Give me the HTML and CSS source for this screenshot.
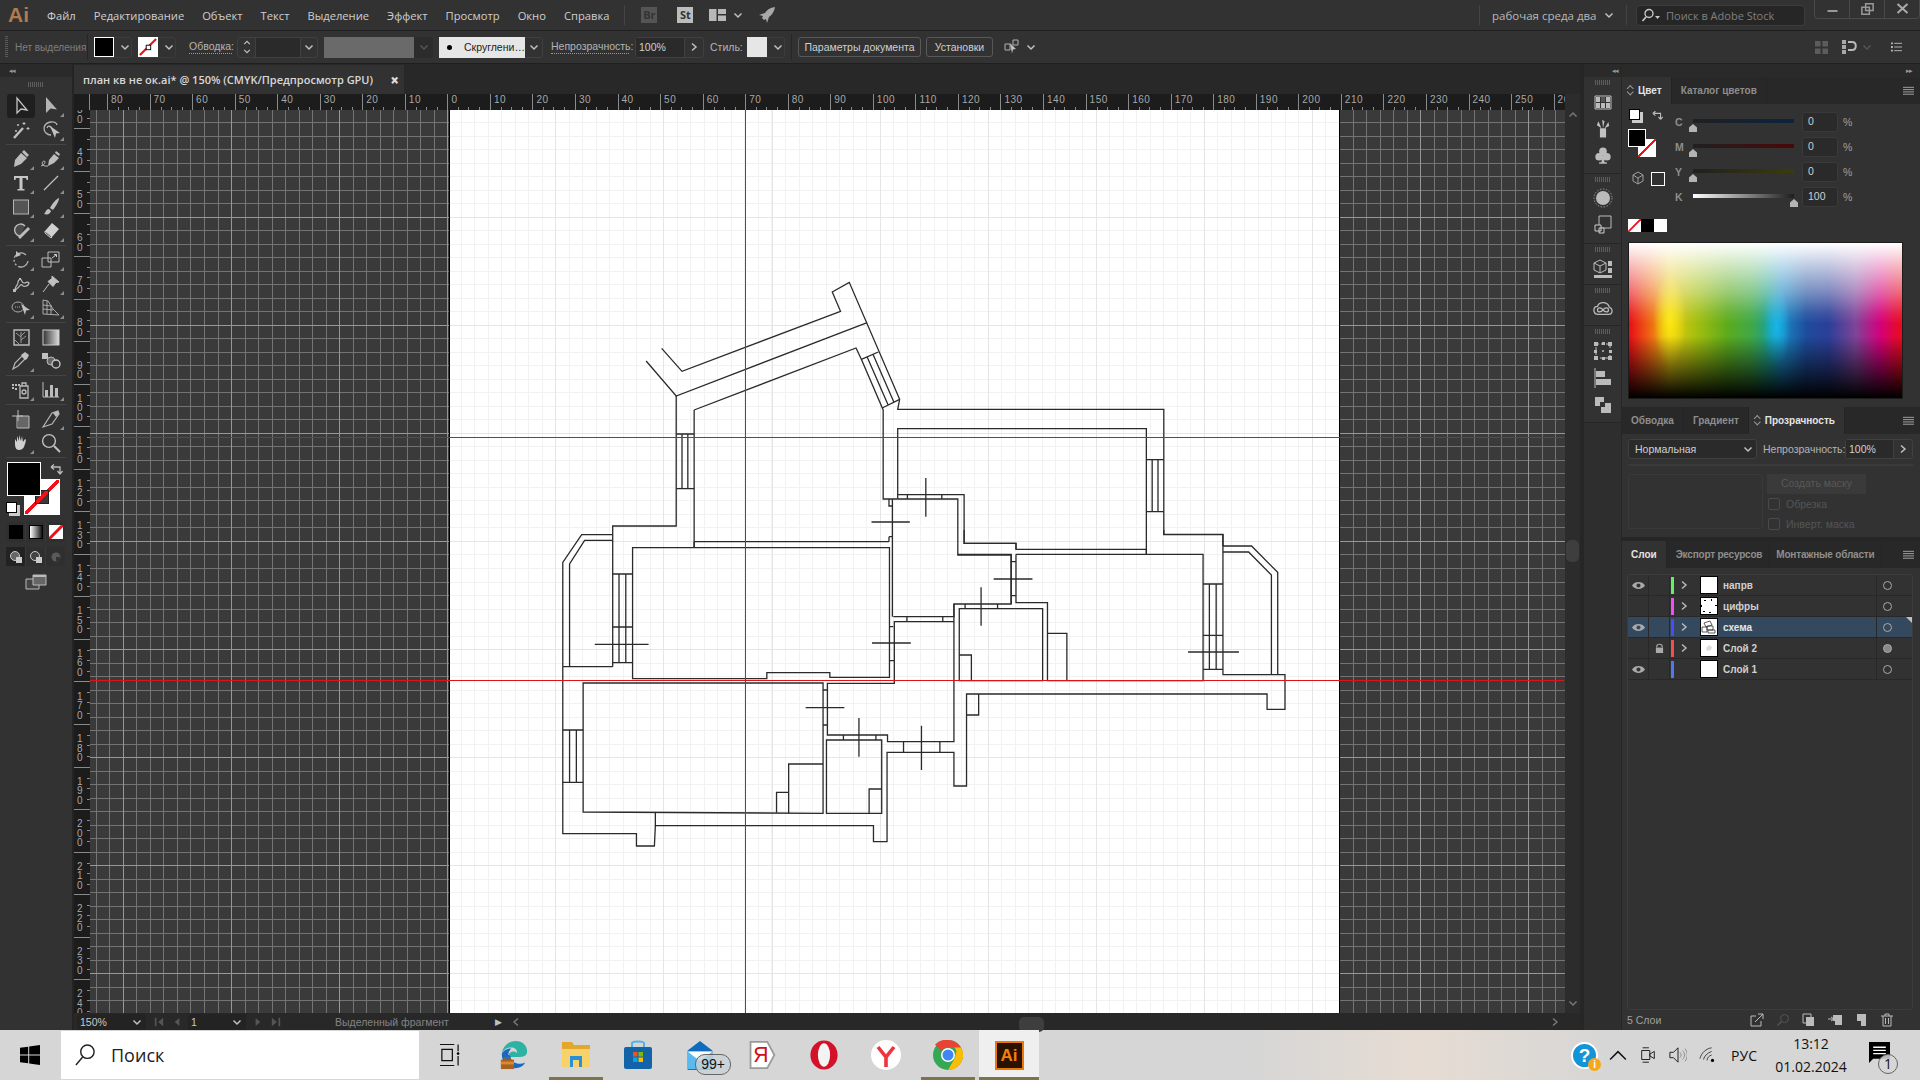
FILE: index.html
```html
<!DOCTYPE html>
<html lang="ru">
<head>
    <meta charset="UTF-8">
    <title>Adobe Illustrator</title>
    <link rel="stylesheet" href="styles.css">
</head>
<body>
    <svg class="defs" width="0" height="0">
        <symbol id="chev" viewBox="0 0 10 10"><path d="M1.5 3.5 5 7l3.5-3.5" fill="none" stroke="currentColor" stroke-width="1.5"/></symbol>
        <symbol id="next" viewBox="0 0 10 10"><path d="M3 1.5 7 5l-4 3.5" fill="none" stroke="currentColor" stroke-width="1.5"/></symbol>
        <symbol id="menu" viewBox="0 0 12 10"><path d="M0 1h12M0 3.5h12M0 6h12M0 8.5h12" fill="none" stroke="currentColor"/></symbol>
        <symbol id="none" viewBox="0 0 20 20"><rect width="20" height="20" fill="#fff"/><path d="M1 19 19 1" stroke="#e8141c" stroke-width="2.4"/><rect x="8" y="8" width="5" height="5" fill="#fff" stroke="#000"/></symbol>
        <symbol id="prev" viewBox="0 0 10 12"><path d="M8 1v10L2 6z" fill="currentColor"/></symbol>
        <symbol id="first" viewBox="0 0 12 12"><path d="M11 1v10L5 6zM1 1h2v10H1z" fill="currentColor"/></symbol>
    </svg>

    <header class="titlebar">
        <div class="ai-logo">Ai</div>
        <nav class="menu">
            <span>Файл</span><span>Редактирование</span><span>Объект</span><span>Текст</span><span>Выделение</span><span>Эффект</span><span>Просмотр</span><span>Окно</span><span>Справка</span>
        </nav>
        <i class="vsep"></i>
        <b class="bridge">Br</b>
        <b class="stock">St</b>
        <svg class="layout-ico" viewBox="0 0 17 12"><path d="M0 0h7.5v12H0zM9 0h8v5H9zM9 6.5h8V12H9z" fill="#b8b8b8"/></svg>
        <svg class="chev title-chev"><use href="#chev"/></svg>
        <svg class="rocket" viewBox="0 0 18 18"><path d="M17 1c-5 .5-8 3-10 6L1 9l4 1-1 2 2 2 2-1 1 4 2-6c3-2 5.500-6 6-10z" fill="#a8a8a8"/></svg>
        <div class="title-right">
            <i class="vsep"></i>
            <span class="workspace-name">рабочая среда два</span>
            <svg class="chev"><use href="#chev"/></svg>
            <i class="vsep"></i>
            <div class="stock-search">
                <svg viewBox="0 0 20 14"><circle cx="8" cy="5.500" r="4" fill="none" stroke="#c8c8c8" stroke-width="1.400"/><path d="M5 9 1.500 13" stroke="#c8c8c8" stroke-width="1.600"/><path d="M14 8h5l-2.500 3z" fill="#c8c8c8"/></svg>
                <span>Поиск в Adobe Stock</span>
            </div>
            <div class="win-controls">
                <span class="win-btn"><svg viewBox="0 0 14 14"><path d="M2 9h10" stroke="#999" stroke-width="2"/></svg></span>
                <span class="win-btn"><svg viewBox="0 0 16 14"><path d="M6 1.500h8v7H6zM2 5h8v7.500H2z" fill="none" stroke="#999" stroke-width="1.600"/></svg></span>
                <span class="win-btn"><svg viewBox="0 0 14 14"><path d="m2 2 10 9M12 2 2 11" stroke="#aaa" stroke-width="2"/></svg></span>
            </div>
        </div>
    </header>

    <section class="controlbar">
        <i class="grip"></i>
        <span class="ctl-label no-sel">Нет выделения</span>
        <i class="ctl-sep"></i>
        <div class="group swatch-group">
            <span class="ctl-swatch black"></span>
            <svg class="chev"><use href="#chev"/></svg>
        </div>
        <div class="group swatch-group">
            <svg class="ctl-swatch" viewBox="0 0 20 20"><use href="#none"/></svg>
            <svg class="chev"><use href="#chev"/></svg>
        </div>
        <span class="ctl-label dotted stroke-label">Обводка:</span>
        <div class="group stroke-group">
            <span class="spin"><svg class="chev flip"><use href="#chev"/></svg><svg class="chev"><use href="#chev"/></svg></span>
            <span class="grow"></span>
            <svg class="chev"><use href="#chev"/></svg>
        </div>
        <div class="group profile-group">
            <span class="profile"></span>
            <svg class="chev dim"><use href="#chev"/></svg>
        </div>
        <div class="group brush-group">
            <span class="brush"><i></i>Скруглени…</span>
            <svg class="chev"><use href="#chev"/></svg>
        </div>
        <span class="ctl-label dotted opacity-label">Непрозрачность:</span>
        <div class="group opacity-group">
            <span class="grow pct">100%</span>
            <svg class="chev"><use href="#next"/></svg>
        </div>
        <span class="ctl-label style-label">Стиль:</span>
        <div class="group swatch-group">
            <span class="ctl-swatch light"></span>
            <svg class="chev"><use href="#chev"/></svg>
        </div>
        <i class="ctl-sep"></i>
        <button class="ctl-btn doc-btn">Параметры документа</button>
        <button class="ctl-btn pref-btn">Установки</button>
        <svg class="arrange-ico" viewBox="0 0 16 16"><path d="M1 5h5v6H1zM9 1h5v5H9z" fill="none" stroke="#b0b0b0"/><path d="M6 4l6 6-3 .5-1 4z" fill="#c0c0c0"/></svg>
        <svg class="chev"><use href="#chev"/></svg>
        <div class="ctl-right">
            <svg class="align-ico" viewBox="0 0 14 14"><path d="M0 0h6v6H0zM8 0h6v6H8zM0 8h6v6H0zM8 8h6v6H8z" fill="#5c5c5c"/></svg>
            <svg class="magnet" viewBox="0 0 16 14"><path d="M0 0h4v4H0zM0 5h4v4H0zM0 10h4v4H0z" fill="#a8a8a8"/><path d="M6 2h4c5 0 5 8 0 8H6" fill="none" stroke="#b8b8b8" stroke-width="2"/></svg>
            <svg class="chev dim"><use href="#chev"/></svg>
            <svg class="props-ico" viewBox="0 0 12 10"><path d="M0 0h2v2H0zM0 4h2v2H0zM0 8h2v2H0z" fill="#bbb"/><path d="M3.500 1H12M3.500 5H12M3.500 9H12" stroke="#bbb"/></svg>
        </div>
    </section>

    <main class="workspace">
        <aside class="toolbar">
            <div class="collapse-row"><span class="dbl">◂◂</span></div>
            <i class="dock-grip"></i>
            <div class="tools">
                <span class="tool active"><svg viewBox="0 0 20 20"><path d="M6 2v15l4-4 6 1z" fill="none" stroke="#c4c4c4" stroke-width="1.300"/></svg></span>
                <span class="tool more"><svg viewBox="0 0 20 20"><path d="M5 1v16l4.500-4.500 6.500 1z" fill="#b4b4b4"/></svg></span>
                <span class="tool"><svg viewBox="0 0 20 20"><path d="m3 18 9-10" stroke="#c0c0c0" stroke-width="2.400"/><path d="M13 2v3M11.500 3.500h3M17 7v3M15.500 8.500h3M7 4v2M6 5h2M5 10v2M4 11h2" stroke="#c0c0c0"/></svg></span>
                <span class="tool more"><svg viewBox="0 0 20 20"><path d="M3 8c1-7 12-8 13-3M3 8c0 4 3 7 7 7M6 8c1-3 4-2 5 1" fill="none" stroke="#b4b4b4" stroke-width="1.300"/><path d="m9 6 10 7-4 .5L14 18z" fill="#c0c0c0"/></svg></span>
                <i class="tool-sep"></i>
                <span class="tool more"><svg viewBox="0 0 20 20"><path d="m3 18 1-7 6-7 6 5-6 6zM11 3l2-2 5 5-2 2z" fill="#bcbcbc"/></svg></span>
                <span class="tool more"><svg viewBox="0 0 20 20"><path d="m7 17 1-6 5-6 5 4-5 5zM14 4l1-2 4 3-1 2z" fill="#bcbcbc"/><path d="M7 17C-1 18 1 12 3 12s1 4-3 5" fill="none" stroke="#bcbcbc"/></svg></span>
                <span class="tool more"><svg viewBox="0 0 20 20"><path d="M3 3h14v4h-1.500c0-1.500 0-2-2-2H11.500v11h2v1.500h-7V16h2V5H6.500c-2 0-2 .5-2 2H3z" fill="#c6c6c6"/></svg></span>
                <span class="tool more"><svg viewBox="0 0 20 20"><path d="M3 17 17 3" stroke="#c0c0c0" stroke-width="1.300"/></svg></span>
                <span class="tool more"><svg viewBox="0 0 20 20"><rect x="2.500" y="3" width="15" height="14" fill="#555" stroke="#b4b4b4"/></svg></span>
                <span class="tool more"><svg viewBox="0 0 20 20"><path d="M18 1c-3 1-7 6-9 10l3 2c2-3 6-8 6-12zM8 12c-3 0-3 3-5 5 4 1 6 0 7-3z" fill="#c0c0c0"/></svg></span>
                <span class="tool more"><svg viewBox="0 0 20 20"><path d="M9 15A6 6 0 1 1 14 5" fill="#4a4a4a" stroke="#bbb" stroke-width="1.400"/><path d="m8 17 10-10" stroke="#bbb" stroke-width="3"/></svg></span>
                <span class="tool more"><svg viewBox="0 0 20 20"><path d="m11 2 7 6-7 8-7-6z" fill="#d0d0d0"/><path d="M4 10v2l6 5 1-1z" fill="#4a4a4a" stroke="#d0d0d0"/></svg></span>
                <i class="tool-sep"></i>
                <span class="tool more"><svg viewBox="0 0 20 20"><path d="M15 5a7 7 0 1 0 2 6" fill="none" stroke="#b0b0b0" stroke-width="1.300" stroke-dasharray="12 0 2 2 2 2 2 2"/><path d="m5 1 0 6 5-2z" fill="#c0c0c0"/></svg></span>
                <span class="tool more"><svg viewBox="0 0 20 20"><path d="M7 2h11v10H7zM1 8h9v9H1z" fill="none" stroke="#bbb"/><path d="m11 8 4-3M13 4.500h2.500V7" stroke="#ccc" fill="none"/></svg></span>
                <span class="tool more"><svg viewBox="0 0 20 20"><path d="M3 17c2-2 1-4 3-6s0-3 2-5c3-3 2 3 5 3s3-2 5 0c-1 4-6 4-7 2s-3 3-8 6z" fill="none" stroke="#bbb" stroke-width="1.200"/><path d="M2 15h3v3H2zM8 4h2v2H8z" fill="#bbb"/></svg></span>
                <span class="tool more"><svg viewBox="0 0 20 20"><path d="m11 2 7 6-3 .5-3 4-5-5 4-3zM8 10 2 18" stroke="#c0c0c0" fill="#c0c0c0"/></svg></span>
                <span class="tool more"><svg viewBox="0 0 20 20"><ellipse cx="7" cy="9" rx="6" ry="5" fill="none" stroke="#aaa"/><path d="M4 9h6" stroke="#aaa" stroke-dasharray="1 1"/><path d="m10 6 9 6-4 .5L14 17z" fill="#c0c0c0"/></svg></span>
                <span class="tool more"><svg viewBox="0 0 20 20"><path d="M2 2v14l16 1-6-6-5-8zM2 7l8 1M2 11l10 1M6 3v13M10 7v9" fill="none" stroke="#aaa"/></svg></span>
                <i class="tool-sep"></i>
                <span class="tool"><svg viewBox="0 0 20 20"><path d="M3 3h15v15H3z" fill="none" stroke="#bbb" stroke-width="1.400"/><path d="M10 16V5M10 10 5 6M10 13l5-4M10 9l4-4M3 12l5 5" stroke="#999"/></svg></span>
                <span class="tool"><svg viewBox="0 0 20 20"><defs><linearGradient id="gt"><stop offset="0" stop-color="#333"/><stop offset="1" stop-color="#ddd"/></linearGradient></defs><rect x="2" y="3" width="16" height="15" fill="url(#gt)"/><rect x="2" y="3" width="16" height="15" fill="none" stroke="#ccc"/></svg></span>
                <span class="tool more"><svg viewBox="0 0 20 20"><path d="m2 18 2-6 7-7 3 3-7 7z" fill="none" stroke="#b8b8b8" stroke-width="1.200"/><path d="m10 4 4-3 4 3-2 4-2 1z" fill="#c0c0c0"/></svg></span>
                <span class="tool"><svg viewBox="0 0 20 20"><path d="M1 2h6v6H1z" fill="#c0c0c0"/><circle cx="10" cy="10" r="4" fill="#666" stroke="#bbb"/><circle cx="15" cy="13" r="4" fill="#333" stroke="#ccc" stroke-width="1.300"/></svg></span>
                <i class="tool-sep"></i>
                <span class="tool more"><svg viewBox="0 0 20 20"><path d="M9 6h8v12H9zM11 3h4v3h-4z" fill="none" stroke="#bbb" stroke-width="1.300"/><circle cx="13" cy="12" r="2" fill="none" stroke="#bbb" stroke-width="1.300"/><path d="M1 4h2v2H1zM4 4h2v2H4zM1 7h2v2H1zM7 4h2v2H7zM4 8h2v2H4z" fill="#bbb"/></svg></span>
                <span class="tool more"><svg viewBox="0 0 20 20"><path d="M2 2v15h16" fill="none" stroke="#bbb"/><path d="M4 10h3v7H4zM9 5h3v12H9zM14 8h3v9h-3z" fill="#bbb"/></svg></span>
                <i class="tool-sep"></i>
                <span class="tool"><svg viewBox="0 0 20 20"><path d="M7 7h11v12H7z" fill="#666"/><path d="M7 1v11M1 7h11" stroke="#bbb"/><path d="M6 7h12v12H6z" fill="none" stroke="#bbb"/></svg></span>
                <span class="tool more"><svg viewBox="0 0 20 20"><path d="m2 18 9-14 6-2 1 3-7 10z" fill="none" stroke="#b8b8b8" stroke-width="1.200"/><path d="m12 4 5-2 1 3-3 3z" fill="#bbb"/></svg></span>
                <span class="tool more"><svg viewBox="0 0 20 20"><path d="M4 11V6l2 3V3l2 5V2l2 6 1-5 1 6 2-3c2 0 0 5-1 8-1 2-3 3-5 3-3 0-4-3-4-6z" fill="#d0d0d0"/></svg></span>
                <span class="tool"><svg viewBox="0 0 20 20"><circle cx="8" cy="8" r="6.400" fill="none" stroke="#c0c0c0" stroke-width="1.400"/><path d="m13 13 6 6" stroke="#c0c0c0" stroke-width="2"/></svg></span>
                <i class="tool-sep"></i>
            </div>
            <div class="fill-stroke">
                <span class="fs-fill"></span>
                <span class="fs-stroke"><i></i></span>
                <svg class="fs-swap" viewBox="0 0 14 14"><path d="M1 4h9v7M1 4l3-2.500M1 4l3 2.500M10 11l-2.500-3M10 11l2.500-3" fill="none" stroke="#bbb" stroke-width="1.300"/></svg>
                <span class="fs-default"></span>
            </div>
            <div class="mode-row">
                <span><i class="m-black"></i></span><span><i class="m-grad"></i></span><span><svg viewBox="0 0 14 14"><rect width="14" height="14" fill="#fff"/><path d="M0 14 14 0" stroke="#e8141c" stroke-width="3"/></svg></span>
            </div>
            <div class="mode-row draw-row">
                <span class="on"><svg viewBox="0 0 14 14"><circle cx="6" cy="6" r="4.500" fill="#666" stroke="#ccc"/><path d="M7 7h6v6H7z" fill="#ccc"/></svg></span>
                <span><svg viewBox="0 0 14 14"><circle cx="6" cy="6" r="4.500" fill="#444" stroke="#ccc"/><path d="M7 7h6v6H7z" fill="#ccc"/></svg></span>
                <span><svg viewBox="0 0 14 14"><circle cx="7" cy="7" r="4.500" fill="#5a5a5a"/><path d="M7 7h4v4H7z" fill="#333"/></svg></span>
            </div>
            <svg class="screen-ico" viewBox="0 0 22 16"><path d="M1 5h13v10H1z" fill="#444" stroke="#bbb"/><path d="M8 1h13v10H8z" fill="#666" stroke="#bbb"/><path d="M8 1h13v2H8z" fill="#bbb"/></svg>
        </aside>

        <section class="doc">
            <div class="tab-row">
                <div class="doc-tab"><span>план кв не ок.ai* @ 150% (CMYK/Предпросмотр GPU)</span><b>×</b></div>
            </div>
            <div class="ruler-h-row">
                <div class="ruler-corner"></div>
                <div class="ruler-h">
                    <span>80</span><span>70</span><span>60</span><span>50</span><span>40</span><span>30</span><span>20</span><span>10</span><span>0</span><span>10</span><span>20</span><span>30</span><span>40</span><span>50</span><span>60</span><span>70</span><span>80</span><span>90</span><span>100</span><span>110</span><span>120</span><span>130</span><span>140</span><span>150</span><span>160</span><span>170</span><span>180</span><span>190</span><span>200</span><span>210</span><span>220</span><span>230</span><span>240</span><span>250</span><span>260</span>
                </div>
                <div class="vscroll-cap"></div>
            </div>
            <div class="doc-body">
                <div class="ruler-v">
                    <span>30</span><span>40</span><span>50</span><span>60</span><span>70</span><span>80</span><span>90</span><span>100</span><span>110</span><span>120</span><span>130</span><span>140</span><span>150</span><span>160</span><span>170</span><span>180</span><span>190</span><span>200</span><span>210</span><span>220</span><span>230</span><span>240</span>
                </div>
                <div class="canvas">
                    <div class="artboard"></div>
                    <svg class="plan" viewBox="90 110 1474 903">
                        <g transform="translate(540 270) scale(.4847 .33333)" class="walls">
                            <path d="M251 235 293 304 620 124 603 66 638 37 742 388 738 418H1287V793H1409V828"/>
                            <path d="M219 273 281 378 675 158"/>
                            <path d="M281 378V768H150V1190"/>
                            <path d="M318 420 652 234 663 268 708 420V687H738"/>
                            <path d="M318 420V833"/>
                            <path d="M663 268 698 246M706 414 742 388M675 261 718 404M687 253 730 396"/>
                            <path d="M281 492H318M281 656H318M293 492V656M305 492V656"/>
                            <path d="M738 687V476H1251V853"/>
                            <path d="M1251 569H1287M1251 725H1287M1263 569V725M1275 569V725"/>
                            <path d="M738 674H875V820H982V838H1251M738 687H862V855H972"/>
                            <path d="M758 674V687M829 674V687"/>
                            <path d="M796 624V740M684 756H763"/>
                            <path d="M720 687V708H727M720 800H727V835M727 687V1040M720 800V815"/>
                            <path d="M318 815H720"/>
                        </g>
                        <g transform="translate(540 530) scale(.4847 .33333)" class="walls">
                            <path d="M191 53H721V442H598V428H468V446H191Z"/>
                            <path d="M318 35V53"/>
                            <path d="M729 260H854V222H972V73H862"/>
                            <path d="M875 0V40H982V57M982 73V218H1047V452H1368V73H982M1251 57V73"/>
                            <path d="M972 73V222M972 95H982M972 197H982"/>
                            <path d="M936 147H1016M910 172V287"/>
                            <path d="M865 236H1037V452H865ZM877 222V236M944 222V236"/>
                            <path d="M854 222V635H717V615H593V460H731V275H854"/>
                            <path d="M757 260V275M831 260V275"/>
                            <path d="M721 290H729M721 392H731M685 339H765"/>
                            <path d="M865 375H890V452M1047 310H1087V452"/>
                            <path d="M47 410V911H199V948H236L238 887H688V935H716V667H854V768H880V492H1500V538H1537V434H1409V14H1287V0"/>
                            <path d="M47 410V97L86 14H150M61 410V102L92 31H150M47 410H150"/>
                            <path d="M150 132H191M150 291H191M150 398H191M163 132V398M177 132V398M113 343H224"/>
                            <path d="M1368 162H1409M1368 316H1409M1368 418H1409M1381 162V418M1395 162V418M1337 366H1442"/>
                            <path d="M1409 48H1468L1522 127V434M1409 66H1462L1509 135V434"/>
                            <path d="M89 459H584V850L89 846Z"/>
                            <path d="M238 848V887"/>
                            <path d="M513 850V702H584M488 848V787H513"/>
                            <path d="M584 480H593M584 585H593M548 533H628M658 564V680"/>
                            <path d="M626 615V630M693 615V630"/>
                            <path d="M591 850V630H705V850ZM679 850V777H705"/>
                            <path d="M750 635V667M825 635V667M787 587V720"/>
                            <path d="M880 555H905V492"/>
                            <path d="M47 600H89M47 757H89M61 600V757M75 600V757"/>
                        </g>
                        <path class="guide" d="M745.500 110V1013M90 437.500H1564M90 680.500H1564"/>
                    </svg>
                </div>
                <div class="vscroll">
                    <svg class="chev flip"><use href="#chev"/></svg>
                    <i class="thumb"></i>
                    <svg class="chev"><use href="#chev"/></svg>
                </div>
            </div>
            <div class="statusbar">
                <div class="st-field zoom-field"><span>150%</span><svg class="chev"><use href="#chev"/></svg></div>
                <span class="st-nav"><svg class="nav-first"><use href="#first"/></svg><svg class="nav-prev"><use href="#prev"/></svg></span>
                <div class="st-field page-field"><span>1</span><svg class="chev"><use href="#chev"/></svg></div>
                <span class="st-nav"><svg class="nav-prev mirror"><use href="#prev"/></svg><svg class="nav-first mirror"><use href="#first"/></svg></span>
                <span class="st-text">Выделенный фрагмент</span>
                <span class="st-play">▶</span>
                <div class="hscroll"><svg class="chev left"><use href="#next"/></svg><i class="thumb"></i><svg class="chev"><use href="#next"/></svg></div>
            </div>
        </section>

        <nav class="dock">
            <div class="dock-top"><span class="dbl">◂◂</span></div>
            <div class="dock-group g1">
                <i class="dock-grip"></i>
                <svg viewBox="0 0 20 20"><path d="M2 4h16v13H2z" fill="none" stroke="#bbb"/><path d="M3 5h4v5H3zM8 5h4v5H8zM13 5h4v5h-4zM3 11h4v5H3zM8 11h4v5H8zM13 11h4v5h-4z" fill="#bbb"/><path d="M8 5h4v5H8z" fill="#555"/></svg>
                <svg viewBox="0 0 20 26"><path d="M6 12h8v12H6z" fill="#c0c0c0"/><path d="M8 12 4 3l-2 5zM10 12 9 1l3 2zM12 12l5-8 1 5z" fill="#c0c0c0"/></svg>
                <svg viewBox="0 0 20 26"><circle cx="10" cy="7" r="5" fill="#bbb"/><circle cx="5" cy="14" r="5" fill="#bbb"/><circle cx="15" cy="14" r="5" fill="#bbb"/><path d="M9 12h2l1 9h3v2H5v-2h3z" fill="#bbb"/></svg>
            </div>
            <div class="dock-group g2">
                <i class="dock-grip"></i>
                <svg viewBox="0 0 20 20"><circle cx="10" cy="10" r="7" fill="#bbb"/><circle cx="10" cy="10" r="9" fill="none" stroke="#999" stroke-dasharray="1.500 1.500"/></svg>
                <svg viewBox="0 0 20 20"><path d="M6 2h12v12H6z" fill="none" stroke="#bbb"/><path d="M2 11h6v6H2zM6 14h5v5H6z" fill="#333" stroke="#ccc"/></svg>
            </div>
            <div class="dock-group g3">
                <i class="dock-grip"></i>
                <svg viewBox="0 0 20 20"><path d="m7 2 6 3v7l-6 3-6-3V5z" fill="none" stroke="#bbb"/><path d="M1 5l6 3 6-3M7 8v7" fill="none" stroke="#bbb"/><path d="M15 3h4v5h-4zM15 10h4v5h-4zM1 17h18v3H1z" fill="#bbb"/></svg>
            </div>
            <div class="dock-group g3">
                <i class="dock-grip"></i>
                <svg viewBox="0 0 22 18"><path d="M6 15C2 15 1 12 1 10c0-3 2-4 4-4 1-3 4-4 6-4 4 0 6 2 7 5 2 1 3 2 3 4 0 3-2 4-4 4zM5 10c0 3 4 3 6 0s6-3 6 0-4 3-6 0-6-3-6 0z" fill="#333" stroke="#bbb" stroke-width="1.400"/></svg>
            </div>
            <div class="dock-group g1">
                <i class="dock-grip"></i>
                <svg viewBox="0 0 20 20"><path d="M3 3h14v14H3z" fill="none" stroke="#bbb" stroke-dasharray="3 2"/><path d="M1 1h4v4H1zM15 1h4v4h-4zM1 15h4v4H1zM15 15h4v4h-4zM9 1h3v3H9zM9 16h3v3H9zM1 9h3v3H1zM16 9h3v3h-3z" fill="#bbb"/><circle cx="10" cy="10" r="1" fill="#bbb"/></svg>
                <svg viewBox="0 0 20 20"><path d="M2 0v20" stroke="#bbb"/><path d="M3 3h9v6H3zM3 11h15v6H3z" fill="#bbb"/></svg>
                <svg viewBox="0 0 20 20"><path d="M2 2h9v9H2z" fill="#bbb"/><path d="M8 8h10v10H8z" fill="#bbb"/><path d="M7 7h5v5H7z" fill="#333"/></svg>
            </div>
        </nav>

        <aside class="panels">
            <div class="dock-top right"><span class="dbl">▸▸</span></div>

            <section class="panel color-panel">
                <div class="tabs">
                    <span class="tab active with-updown"><i class="updown"></i>Цвет</span>
                    <span class="tab">Каталог цветов</span>
                    <svg class="panel-menu"><use href="#menu"/></svg>
                </div>
                <div class="color-body">
                    <div class="color-top">
                        <div class="color-left">
                            <span class="fs-default small"></span>
                            <svg class="fs-swap small" viewBox="0 0 14 14"><path d="M1 4h9v7M1 4l3-2.500M1 4l3 2.500M10 11l-2.500-3M10 11l2.500-3" fill="none" stroke="#bbb" stroke-width="1.300"/></svg>
                            <span class="cp-fill"></span>
                            <span class="cp-stroke"></span>
                            <svg class="cube" viewBox="0 0 14 14"><path d="m7 1 5 3v6l-5 3-5-3V4zM2 4l5 3 5-3M7 7v6" fill="none" stroke="#a0a0a0"/></svg>
                            <span class="outline-sq"></span>
                        </div>
                        <div class="sliders">
                            <div class="slider-row"><label>C</label><div class="track t-c"><i class="pin"></i></div><span class="num">0</span><em>%</em></div>
                            <div class="slider-row"><label>M</label><div class="track t-m"><i class="pin"></i></div><span class="num">0</span><em>%</em></div>
                            <div class="slider-row"><label>Y</label><div class="track t-y"><i class="pin"></i></div><span class="num">0</span><em>%</em></div>
                            <div class="slider-row"><label>K</label><div class="track t-k"><i class="pin end"></i></div><span class="num">100</span><em>%</em></div>
                        </div>
                    </div>
                    <div class="mini-swatches">
                        <svg viewBox="0 0 14 14"><rect width="14" height="14" fill="#fff"/><path d="M0 14 14 0" stroke="#e8141c" stroke-width="2"/></svg><i class="mk"></i><i class="mw"></i>
                    </div>
                    <div class="spectrum"></div>
                </div>
            </section>

            <section class="panel transp-panel">
                <div class="tabs">
                    <span class="tab">Обводка</span>
                    <span class="tab">Градиент</span>
                    <span class="tab active with-updown"><i class="updown"></i>Прозрачность</span>
                    <svg class="panel-menu"><use href="#menu"/></svg>
                </div>
                <div class="transp-top">
                    <div class="blend-select"><span>Нормальная</span><svg class="chev"><use href="#chev"/></svg></div>
                    <span class="ctl-label panel-label">Непрозрачность:</span>
                    <div class="group p-opacity"><span class="grow pct">100%</span><svg class="chev"><use href="#next"/></svg></div>
                </div>
                <div class="transp-mask">
                    <div class="mask-preview"></div>
                    <div class="mask-opts">
                        <span class="mask-btn">Создать маску</span>
                        <label class="mask-check"><i></i>Обрезка</label>
                        <label class="mask-check"><i></i>Инверт. маска</label>
                    </div>
                </div>
            </section>

            <section class="panel layers-panel">
                <div class="tabs">
                    <span class="tab active">Слои</span>
                    <span class="tab tight">Экспорт ресурсов</span>
                    <span class="tab tight">Монтажные области</span>
                    <svg class="panel-menu"><use href="#menu"/></svg>
                </div>
                <div class="layers">
                    <div class="layer">
                        <span class="l-eye"><svg viewBox="0 0 14 9"><path d="M0 4.500C3-.5 11-.5 14 4.500 11 9.500 3 9.500 0 4.500z" fill="#aaa"/><circle cx="7" cy="4.500" r="2.200" fill="#333"/></svg></span>
                        <span class="l-lock"></span><i class="l-color" style="background:#5cf55c"></i>
                        <svg class="l-arrow"><use href="#next"/></svg><span class="thumb-box"></span><span class="l-name">напрв</span><span class="l-target"><i></i></span>
                    </div>
                    <div class="layer">
                        <span class="l-eye"></span>
                        <span class="l-lock"></span><i class="l-color" style="background:#f54cf5"></i>
                        <svg class="l-arrow"><use href="#next"/></svg><span class="thumb-box"><svg viewBox="0 0 16 16"><path d="M3 2h2v1H3zM10 1h1v2h-1zM0 7h1v2H0zM14 7h2v1h-2zM2 13h2v1H2zM8 14h2v1H8z"/></svg></span><span class="l-name">цифры</span><span class="l-target"><i></i></span>
                    </div>
                    <div class="layer selected">
                        <span class="l-eye"><svg viewBox="0 0 14 9"><path d="M0 4.500C3-.5 11-.5 14 4.500 11 9.500 3 9.500 0 4.500z" fill="#aaa"/><circle cx="7" cy="4.500" r="2.200" fill="#34495e"/></svg></span>
                        <span class="l-lock"></span><i class="l-color" style="background:#4c4cf5"></i>
                        <svg class="l-arrow"><use href="#next"/></svg><span class="thumb-box"><svg viewBox="0 0 16 16"><path d="M3 4 9 2l2 4-6 2zM6 7h6v4H6zM1 8h5v5H1zM7 11h7v3H7z" fill="none" stroke="#333" stroke-width=".8"/></svg></span><span class="l-name">схема</span><span class="l-target"><i></i></span><b class="l-corner"></b>
                    </div>
                    <div class="layer">
                        <span class="l-eye"></span>
                        <span class="l-lock"><svg viewBox="0 0 10 12"><path d="M2 5V3.500C2 .5 8 .5 8 3.500V5" fill="none" stroke="#aaa" stroke-width="1.300"/><path d="M1 5h8v6H1z" fill="#aaa"/></svg></span><i class="l-color" style="background:#f54c4c"></i>
                        <svg class="l-arrow"><use href="#next"/></svg><span class="thumb-box"><svg viewBox="0 0 16 16"><path d="M5 8l3-3 3 2-1 3-4 1z" fill="#ddd"/></svg></span><span class="l-name">Слой 2</span><span class="l-target filled"><i></i></span>
                    </div>
                    <div class="layer">
                        <span class="l-eye"><svg viewBox="0 0 14 9"><path d="M0 4.500C3-.5 11-.5 14 4.500 11 9.500 3 9.500 0 4.500z" fill="#aaa"/><circle cx="7" cy="4.500" r="2.200" fill="#333"/></svg></span>
                        <span class="l-lock"></span><i class="l-color" style="background:#4c78f5"></i>
                        <span class="l-arrow"></span><span class="thumb-box"></span><span class="l-name">Слой 1</span><span class="l-target"><i></i></span>
                    </div>
                </div>
                <div class="layers-foot">
                    <span class="foot-count">5 Слои</span>
                    <div class="foot-icons">
                        <svg viewBox="0 0 14 14"><path d="M6 3H1v10h10V8" fill="none" stroke="#bbb"/><path d="m5 9 8-8M8 1h5v5" fill="none" stroke="#bbb"/></svg>
                        <svg viewBox="0 0 14 14"><circle cx="8.500" cy="5.500" r="4" fill="none" stroke="#555"/><path d="m5.500 8.500-4 4" stroke="#555" stroke-width="1.400"/></svg>
                        <svg viewBox="0 0 14 14"><path d="M1 1h8v9H1z" fill="none" stroke="#bbb"/><path d="M4 4h8v9H4z" fill="#bbb"/></svg>
                        <svg viewBox="0 0 14 14"><path d="M0 6h5M3 4l3 2-3 2" fill="none" stroke="#bbb"/><path d="M5 2h9v10H7V8H5z" fill="#bbb"/></svg>
                        <svg viewBox="0 0 14 14"><path d="M3 1h9v12H7V8H3z" fill="#bbb"/></svg>
                        <svg viewBox="0 0 14 14"><path d="M1 3h12M5 3V1h4v2M3 3v10h8V3M5.500 5v6M8.500 5v6" fill="none" stroke="#bbb"/></svg>
                    </div>
                </div>
            </section>
        </aside>
    </main>

    <footer class="taskbar">
        <svg class="win-logo" viewBox="0 0 20 20"><path d="M0 2.800 8.200 1.700V9.500H0zM9.200 1.500 20 0V9.500H9.200zM0 10.500H8.200V18.300L0 17.200zM9.200 10.500H20V20L9.200 18.500z" fill="#000"/></svg>
        <div class="search-box">
            <svg viewBox="0 0 22 24"><circle cx="13" cy="8" r="7" fill="none" stroke="#222" stroke-width="1.500"/><path d="M8 13.500 1 22" stroke="#222" stroke-width="1.500"/></svg>
            <span>Поиск</span>
        </div>
        <div class="task-icons">
            <span class="task"><svg viewBox="0 0 22 24"><path d="M1 1h15M1 23h15M3 6h11v12H3zM20 1v7M20 13v10" fill="none" stroke="#111" stroke-width="1.300"/><circle cx="20" cy="10.500" r="1.400"/></svg></span>
            <span class="task"><svg viewBox="0 0 30 32"><path d="M2 15C3 5 11 1 17 1c7 0 12 5 12 11 0 4-3 6-7 6H9c0-6 7-7 9-4 1-3-2-6-6-6-5 0-9 3-10 7z" fill="#2db3a3"/><path d="M2 15c0 9 6 15 14 15 5 0 9-2 11-6-6 3-15 1-16-7-1-1-2-1-2-1 0-3 1-5 3-7-5 0-9 3-10 6z" fill="#1868c4"/><rect x="1" y="21" width="14" height="10" fill="#a8621f"/><rect x="1" y="23" width="14" height="3" fill="#d98c2f"/><rect x="5" y="19" width="6" height="2" fill="none" stroke="#a8621f"/></svg></span>
            <span class="task bar"><svg viewBox="0 0 30 28"><path d="M1 1h10l2 3h16v6H1z" fill="#e3a72c"/><path d="M1 8h28v18H1z" fill="#f7d26a"/><path d="M9 15h12v11h-3v-7h-6v7H9z" fill="#2b8fd6"/></svg></span>
            <span class="task"><svg viewBox="0 0 30 30"><path d="M9 8V3c0-2 12-2 12 0v5" fill="none" stroke="#4fb3e8" stroke-width="2"/><rect x="1" y="7" width="28" height="22" rx="2" fill="#1263a8"/><path d="M10 12h4.500v4.500H10z" fill="#f25022"/><path d="M15.500 12H20v4.500h-4.500z" fill="#7fba00"/><path d="M10 17.500h4.500V22H10z" fill="#00a4ef"/><path d="M15.500 17.500H20V22h-4.500z" fill="#ffb900"/></svg></span>
            <span class="task mail"><svg viewBox="0 0 32 34"><path d="M2 12 16 1l14 11v22H2z" fill="#0f6cbd"/><path d="M2 13h28v20H2z" fill="#5ab9ee"/><path d="M2 13 16 24l14-11" fill="#fff"/></svg><b class="badge">99+</b></span>
            <span class="task"><svg viewBox="0 0 30 34"><path d="M2 2h19l8 15-8 15H2z" fill="#fff" stroke="#9a9a9a" stroke-width="2"/><text x="5" y="25" class="ya-y">Я</text></svg></span>
            <span class="task"><svg viewBox="0 0 30 32"><ellipse cx="15" cy="16" rx="14.500" ry="15.500" fill="#d3122a"/><ellipse cx="15" cy="16" rx="6.500" ry="12.500" fill="#f3f3f3"/></svg></span>
            <span class="task"><svg viewBox="0 0 30 30"><circle cx="15" cy="15" r="15" fill="#fff"/><path d="M7 7l8 10 8-10M15 16v11" fill="none" stroke="#f0333c" stroke-width="3.600"/></svg></span>
            <span class="task bar"><svg viewBox="0 0 30 30"><circle cx="15" cy="15" r="15" fill="#34a853"/><path d="M15 0a15 15 0 0 1 13 7.500H15a7.500 7.500 0 0 0-6.500 3.750L2 4.500A15 15 0 0 1 15 0z" fill="#ea4335"/><path d="M28 7.500A15 15 0 0 1 15 30l6.500-11.250A7.500 7.500 0 0 0 22.500 15 7 7 0 0 0 21.500 7.500z" fill="#fbbc04"/><circle cx="15" cy="15" r="7" fill="#fff"/><circle cx="15" cy="15" r="5.500" fill="#4285f4"/></svg></span>
            <span class="task bar current"><b class="ai-task">Ai</b></span>
        </div>
        <div class="tray">
            <span class="help"><b>?</b><i>i</i></span>
            <svg class="tray-ico" viewBox="0 0 16 10"><path d="M1 9 8 2l7 7" fill="none" stroke="#111" stroke-width="1.300"/></svg>
            <svg class="tray-ico" viewBox="0 0 16 20"><path d="M1 5h9v10H1zM10 9l5-3v8l-5-3zM2 2h7M2 18h7" fill="none" stroke="#111"/></svg>
            <svg class="tray-ico" viewBox="0 0 20 20"><path d="M1 7h4l5-5v16l-5-5H1z" fill="none" stroke="#111"/><path d="M12 7c2 2 2 4 0 6M15 5c3 3 3 7 0 10M18 3c3 5 3 9 0 14" fill="none" stroke="#888"/></svg>
            <svg class="tray-ico" viewBox="0 0 20 20"><path d="M1 14C3 7 8 3 14 2M5 15C6 11 9 8 14 6M9 16c0-3 2-5 5-6" fill="none" stroke="#333"/><circle cx="15" cy="16" r="1.800"/></svg>
            <span class="lang">РУС</span>
            <div class="clock"><span>13:12</span><span>01.02.2024</span></div>
            <span class="notify"><svg viewBox="0 0 20 20"><path d="M0 0h20v16H4l-4 4z"/><path d="M4 5h12M4 8h12M4 11h12" stroke="#fff" stroke-width="1.200"/></svg><b>1</b></span>
        </div>
    </footer>
</body>
</html>
```

FILE: styles.css
```css
* {
    box-sizing: border-box;
}

html, body {
    margin: 0;
    height: 100%;
}

/* whole window */
body {
    width: 1920px;
    height: 1080px;
    display: flex;
    flex-direction: column;
    overflow: hidden;
    background: #262626;
    color: #c8c8c8;
    font-family: "Liberation Sans", sans-serif;
    font-size: 10.5px;
}

.defs {
    position: absolute;
}

i, em {
    font-style: normal;
}

.chev {
    width: 10px;
    height: 10px;
    flex: none;
    color: #c0c0c0;
}

.chev.flip {
    transform: scaleY(-1);
}

.chev.left {
    transform: scaleX(-1);
}

.chev.dim {
    color: #555;
}

/* title bar */
.titlebar {
    height: 31px;
    flex: none;
    display: flex;
    align-items: center;
    background: #323232;
    border-bottom: 1px solid #1f1f1f;
    font-family: "Open Sans", sans-serif;
}

.ai-logo {
    width: 47px;
    padding-left: 8px;
    color: #b07b4f;
    font-size: 21px;
    font-weight: 700;
    font-family: "Liberation Sans", sans-serif;
}

.menu {
    display: flex;
    gap: 18px;
    font-size: 11.2px;
    color: #cfcfcf;
}

.vsep {
    width: 1px;
    height: 20px;
    background: #444;
    flex: none;
}

.titlebar > .vsep {
    margin-left: 15px;
}

.bridge, .stock {
    width: 16px;
    height: 16px;
    margin-left: 16px;
    text-align: center;
    line-height: 16px;
    font-size: 11px;
    background: #555;
    color: #333;
}

.stock {
    margin-left: 20px;
    background: #bdbdbd;
}

.layout-ico {
    width: 17px;
    height: 12px;
    margin-left: 16px;
}

.title-chev {
    margin-left: 7px;
}

.rocket {
    width: 18px;
    height: 18px;
    margin-left: 15px;
}

.title-right {
    margin-left: auto;
    display: flex;
    align-items: center;
    height: 100%;
}

.workspace-name {
    margin-left: 12px;
    width: 112px;
    font-size: 11.5px;
    color: #b8b8b8;
}

.title-right .chev {
    margin-right: 12px;
}

.stock-search {
    width: 169px;
    height: 21px;
    margin: 0 9px 0 9px;
    display: flex;
    align-items: center;
    gap: 5px;
    padding-left: 4px;
    background: #262626;
    border: 1px solid #3c3c3c;
    border-radius: 4px;
    color: #808080;
    font-size: 11px;
}

.stock-search svg {
    width: 20px;
    height: 14px;
}

.win-controls {
    width: 106px;
    height: 19px;
    align-self: flex-start;
    display: flex;
    border: 1px solid #4a4a4a;
    border-top: 0;
    border-radius: 0 0 4px 4px;
}

.win-btn {
    flex: 1;
    display: flex;
    align-items: center;
    justify-content: center;
    border-left: 1px solid #4a4a4a;
}

.win-btn:first-child {
    border-left: 0;
}

.win-btn svg {
    width: 15px;
    height: 14px;
}

/* control bar */
.controlbar {
    height: 33px;
    flex: none;
    display: flex;
    align-items: center;
    gap: 6px;
    background: #323232;
    border-bottom: 1px solid #1f1f1f;
}

.grip {
    width: 3px;
    height: 22px;
    margin-left: 5px;
    margin-right: 1px;
    background: repeating-linear-gradient(#5a5a5a 0 1px, transparent 1px 2px);
}

.ctl-label {
    flex: none;
    color: #b4b4b4;
    white-space: nowrap;
}

.no-sel {
    width: 70px;
    font-size: 10px;
    color: #7e7e7e;
    margin-right: -4px;
}

.dotted {
    border-bottom: 1px dotted #999;
    line-height: 13px;
}

.ctl-sep {
    width: 1px;
    height: 26px;
    background: #262626;
    flex: none;
}

.group {
    height: 21px;
    display: flex;
    align-items: center;
    border: 1px solid #404040;
    border-radius: 3px;
    flex: none;
}

.group .chev {
    margin: 0 3px;
}

.swatch-group {
    width: 38px;
    border-color: #3c3c3c;
}

.ctl-swatch {
    width: 20px;
    height: 20px;
    flex: none;
    display: block;
    border: 1px solid #fff;
    margin: -1px 3px -1px -1px;
}

.ctl-swatch.black {
    background: #000;
}

.ctl-swatch.light {
    background: #e6e6e6;
    border-color: #e6e6e6;
}

.stroke-label {
    width: 43px;
    margin-left: 7px;
    margin-right: -1px;
}

.stroke-group {
    width: 81px;
}

.spin {
    width: 18px;
    height: 100%;
    display: flex;
    flex-direction: column;
    justify-content: center;
    align-items: center;
    border-right: 1px solid #404040;
}

.spin .chev {
    width: 8px;
    height: 8px;
    margin: 0;
}

.grow {
    flex: 1;
    height: 100%;
    background: #2a2a2a;
    border-right: 1px solid #404040;
}

.stroke-group .chev {
    margin: 0 3px;
}

.profile-group {
    width: 109px;
    border: 0;
    background: #2c2c2c;
}

.profile {
    width: 90px;
    height: 100%;
    background: #6a6a6a;
}

.profile-group .chev {
    margin-left: 5px;
}

.brush-group {
    width: 104px;
}

.brush {
    width: 86px;
    height: 21px;
    margin: -1px 0 -1px -1px;
    display: flex;
    align-items: center;
    background: #e6e6e6;
    color: #222;
    white-space: nowrap;
}

.brush i {
    width: 5px;
    height: 5px;
    margin: 0 12px 0 8px;
    border-radius: 50%;
    background: #000;
    flex: none;
}

.brush-group .chev {
    margin-left: 4px;
}

.opacity-label {
    width: 78px;
    margin-left: 2px;
}

.style-label {
    width: 31px;
}

.opacity-group {
    width: 69px;
}

.pct {
    padding-left: 3px;
    line-height: 19px;
    color: #d0d0d0;
}

.opacity-group .chev {
    margin: 0 4px;
}

.ctl-btn {
    height: 20px;
    padding: 0;
    background: #323232;
    border: 1px solid #585858;
    border-radius: 3px;
    color: #d0d0d0;
    font: inherit;
    flex: none;
}

.doc-btn {
    width: 123px;
}

.pref-btn {
    width: 67px;
    margin-left: -1px;
}

.arrange-ico {
    width: 16px;
    height: 16px;
    margin-left: 5px;
}

.ctl-right {
    margin-left: auto;
    display: flex;
    align-items: center;
    margin-right: 18px;
}

.align-ico {
    width: 13px;
    height: 13px;
    margin-right: 14px;
}

.magnet {
    width: 16px;
    height: 14px;
    margin-right: 4px;
}

.props-ico {
    width: 11px;
    height: 10px;
    margin-left: 19px;
}

/* main area */
.workspace {
    flex: 1;
    min-height: 0;
    display: flex;
}

.collapse-row {
    height: 13px;
    padding-left: 9px;
    font-size: 7px;
    line-height: 13px;
    color: #999;
}

.dbl {
    letter-spacing: -1px;
}

.toolbar {
    width: 74px;
    flex: none;
    background: linear-gradient(#2a2a2a 0 13px, #323232 13px);
    border-right: 2px solid #242424;
    display: flex;
    flex-direction: column;
}

.dock-grip {
    display: block;
    width: 16px;
    height: 5px;
    margin: 0 auto;
    background: repeating-linear-gradient(90deg, #5e5e5e 0 1px, transparent 1px 2px);
}

.toolbar > .dock-grip {
    margin-top: 5px;
    margin-bottom: 7px;
}

.tools {
    display: grid;
    grid-template-columns: 30px 30px;
    justify-content: center;
    align-content: start;
}

.tool {
    position: relative;
    height: 24px;
    display: flex;
    align-items: center;
    justify-content: center;
}

.tool svg {
    width: 20px;
    height: 20px;
}

.tool.active {
    background: #1f1f1f;
    border-radius: 3px;
    margin: 0 1px;
}

.tool.more::after {
    content: "";
    position: absolute;
    right: 2px;
    bottom: 1px;
    border: 2px solid transparent;
    border-right-color: #8c8c8c;
    border-bottom-color: #8c8c8c;
}

.tool-sep {
    grid-column: span 2;
    height: 1px;
    margin: 2px 0;
    background: #444;
}

/* fill and stroke boxes sit over each other */
.fill-stroke {
    position: relative;
    height: 58px;
    margin-top: 2px;
    flex: none;
}

.fs-fill {
    position: absolute;
    z-index: 1;
    left: 7px;
    top: 0;
    width: 34px;
    height: 34px;
    background: #000;
    border: 1px solid #fff;
}

.fs-stroke {
    position: absolute;
    left: 24px;
    top: 17px;
    width: 36px;
    height: 36px;
    background: linear-gradient(to top left, #fff calc(50% - 1.500px), #f01218 calc(50% - 1.500px) calc(50% + 1.500px), #fff calc(50% + 1.500px));
    border: 1px solid #fff;
}

.fs-stroke i {
    position: absolute;
    left: 10px;
    top: 10px;
    width: 14px;
    height: 14px;
    border: 1px solid #222;
    background: linear-gradient(to top left, #3a3a3a calc(50% - 1.500px), #f01218 calc(50% - 1.500px) calc(50% + 1.500px), #3a3a3a calc(50% + 1.500px));
}

.fs-swap {
    position: absolute;
    left: 50px;
    top: 1px;
    width: 14px;
    height: 14px;
}

.fs-default {
    position: absolute;
    left: 7px;
    top: 41px;
    width: 9px;
    height: 9px;
    background: #fff;
    box-shadow: 0 0 0 1px #000, 3px 3px 0 1px #ccc, 3px 3px 0 0 #000;
}

.mode-row {
    display: flex;
    width: 59px;
    height: 20px;
    margin: 2px 0 0 6px;
    border-radius: 3px;
    background: #3a3a3a;
    gap: 1px;
    flex: none;
}

.mode-row span {
    flex: 1;
    display: flex;
    align-items: center;
    justify-content: center;
    background: #2f2f2f;
}

.mode-row i, .mode-row svg {
    width: 14px;
    height: 14px;
    display: block;
}

.m-black {
    background: #000;
}

.m-grad {
    background: linear-gradient(90deg, #fff, #111);
    border: 1px solid #000;
}

.draw-row {
    margin-top: 5px;
    height: 19px;
}

.draw-row .on {
    background: #222;
}

.screen-ico {
    width: 22px;
    height: 16px;
    margin: 8px 0 0 25px;
}

/* document column */
.doc {
    flex: 1;
    min-width: 0;
    display: flex;
    flex-direction: column;
    background: #282828;
}

.tab-row {
    height: 30px;
    flex: none;
    padding-top: 1px;
    background: #282828;
}

.doc-tab {
    width: 330px;
    height: 29px;
    padding: 0 5px 0 9px;
    display: flex;
    align-items: center;
    justify-content: space-between;
    background: #323232;
    font-family: "Open Sans", sans-serif;
    font-size: 11px;
    font-weight: 600;
    color: #d8d8d8;
    white-space: nowrap;
}

.doc-tab b {
    font-size: 15px;
    color: #ddd;
}

.ruler-h-row {
    height: 16px;
    flex: none;
    display: flex;
    background: #1c1c1c;
}

.ruler-corner {
    width: 16px;
    flex: none;
    border-right: 1px solid #8a8a8a;
}

.ruler-h {
    flex: 1;
    min-width: 0;
    padding-left: 17px;
    display: flex;
    overflow: hidden;
}

.ruler-h span {
    flex: 0 0 42.55px;
    height: 100%;
    padding-left: 3px;
    border-left: 1px solid #8a8a8a;
    background: repeating-linear-gradient(90deg, transparent 0 9.64px, #8a8a8a 9.64px 10.64px) left bottom / 100% 3px no-repeat;
    font-size: 10px;
    line-height: 12px;
    letter-spacing: .5px;
    color: #a8a8a8;
}

.vscroll-cap {
    width: 15px;
    flex: none;
    background: #2c2c2c;
}

.doc-body {
    flex: 1;
    min-height: 0;
    display: flex;
}

.ruler-v {
    width: 16px;
    flex: none;
    background: #1c1c1c;
    overflow: hidden;
}

.ruler-v span {
    height: 42.55px;
    display: flex;
    flex-direction: column;
    justify-content: flex-end;
    width: 16px;
    padding: 0 9px 4px 3px;
    border-top: 1px solid #8a8a8a;
    background: repeating-linear-gradient(transparent 0 9.64px, #8a8a8a 9.64px 10.64px) right top / 3px 100% no-repeat;
    font-size: 10px;
    line-height: 9.5px;
    word-break: break-all;
    color: #a8a8a8;
}

.ruler-v span:first-child {
    margin-top: -24.2px;
}

/* grid lines: major every 108.1px, minor every 13.5125px */
.canvas {
    position: relative;
    flex: 1;
    min-width: 0;
    background-color: #3a3a3a;
    background-image:
        repeating-linear-gradient(90deg, transparent 0 32.9px, #979797 32.9px 33.9px, transparent 33.9px 108.1px),
        repeating-linear-gradient(transparent 0 106.7px, #979797 106.7px 107.7px, transparent 107.7px 108.1px),
        repeating-linear-gradient(90deg, transparent 0 5.9px, #747474 5.9px 6.9px, transparent 6.9px 13.5125px),
        repeating-linear-gradient(transparent 0 12.1px, #747474 12.1px 13.1px, transparent 13.1px 13.5125px);
}

.artboard {
    position: absolute;
    left: 359px;
    top: 0;
    bottom: 0;
    width: 891px;
    border-left: 1px solid #000;
    border-right: 1px solid #000;
    background-color: #fff;
    background-image:
        repeating-linear-gradient(90deg, transparent 0 105.3px, #e6e6e6 105.3px 106.3px, transparent 106.3px 108.1px),
        repeating-linear-gradient(transparent 0 106.7px, #e6e6e6 106.7px 107.7px, transparent 107.7px 108.1px),
        repeating-linear-gradient(90deg, transparent 0 10.7px, #f2f2f2 10.7px 11.7px, transparent 11.7px 13.5125px),
        repeating-linear-gradient(transparent 0 12.1px, #f2f2f2 12.1px 13.1px, transparent 13.1px 13.5125px);
}

.plan {
    position: absolute;
    left: 0;
    top: 0;
    width: 1474px;
    height: 903px;
}

.walls path {
    fill: none;
    stroke: #2a2a2a;
    stroke-width: 1.3px;
    vector-effect: non-scaling-stroke;
}

.guide {
    fill: none;
    stroke: #dc1418;
    stroke-width: 1px;
    shape-rendering: crispEdges;
}

.vscroll {
    width: 15px;
    flex: none;
    display: flex;
    flex-direction: column;
    align-items: center;
    justify-content: space-between;
    padding: 0 0 5px;
    background: #2c2c2c;
    position: relative;
}

.vscroll .chev {
    color: #777;
}

.vscroll .thumb {
    position: absolute;
    left: 1px;
    top: 430px;
    width: 13px;
    height: 22px;
    border-radius: 5px;
    background: #3e3e3e;
}

.statusbar {
    height: 17px;
    flex: none;
    display: flex;
    align-items: center;
    padding-left: 3px;
    background: #282828;
}

.st-field {
    height: 16px;
    display: flex;
    align-items: center;
    justify-content: space-between;
    background: #232323;
    border-radius: 3px 3px 0 0;
    padding: 0 4px 0 3px;
}

.zoom-field {
    width: 69px;
}

.page-field {
    width: 58px;
}

.st-nav {
    width: 42px;
    display: flex;
    align-items: center;
    justify-content: center;
    gap: 9px;
    color: #555;
}

.nav-first {
    width: 10px;
    height: 10px;
}

.nav-prev {
    width: 8px;
    height: 10px;
}

.mirror {
    transform: scaleX(-1);
}

.st-text {
    width: 207px;
    padding-left: 47px;
    color: #848484;
}

.st-play {
    width: 16px;
    font-size: 9px;
    color: #c0c0c0;
}

.hscroll {
    flex: 1;
    position: relative;
    display: flex;
    align-items: center;
    justify-content: space-between;
    padding-right: 20px;
}

.hscroll .chev {
    color: #777;
}

.hscroll .thumb {
    position: absolute;
    left: 508px;
    top: 0;
    width: 25px;
    height: 15px;
    border-radius: 5px;
    background: #3e3e3e;
}

/* narrow icon dock */
.dock {
    width: 42px;
    flex: none;
    display: flex;
    flex-direction: column;
    background: #2e2e2e;
    border-left: 4px solid #262626;
    border-right: 1px solid #262626;
}

.dock-top {
    height: 13px;
    font-size: 7px;
    line-height: 13px;
    text-align: right;
    padding-right: 3px;
    color: #999;
    background: #2a2a2a;
}

.dock-top.right {
    padding-right: 8px;
}

.dock-group {
    display: flex;
    flex-direction: column;
    align-items: center;
    gap: 6px;
    padding-top: 3px;
    background: #323232;
    border-bottom: 1px solid #262626;
}

.dock-group svg {
    width: 20px;
    height: 20px;
    flex: none;
}

.g1 {
    flex: 0 0 97px;
    gap: 7px;
}

.g2 {
    flex: 0 0 70px;
}

.g3 {
    flex: 0 0 41px;
}

/* right panels */
.panels {
    width: 298px;
    flex: none;
    display: flex;
    flex-direction: column;
    background: #262626;
}

.panel {
    background: #323232;
}

.tabs {
    height: 27px;
    display: flex;
    background: #282828;
    align-items: stretch;
    position: relative;
}

.tab {
    display: flex;
    align-items: center;
    padding: 0 9px;
    font-size: 10px;
    font-weight: 700;
    color: #8e8e8e;
    white-space: nowrap;
    border-right: 1px solid #242424;
}

.tab.active {
    background: #323232;
    color: #e4e4e4;
}

.tab.with-updown {
    padding-left: 6px;
}

.tab.tight {
    padding: 0 7px 0 9px;
    letter-spacing: -.2px;
}

.tab.tight + .tab.tight {
    padding-left: 6px;
}

.updown {
    width: 5px;
    height: 10px;
    margin-right: 5px;
    position: relative;
}

.updown::before, .updown::after {
    content: "";
    position: absolute;
    left: 0;
    width: 3.5px;
    height: 3.5px;
    border: 1px solid #999;
    border-width: 1px 0 0 1px;
    transform: rotate(45deg);
}

.updown::before {
    top: 0;
}

.updown::after {
    bottom: 1px;
    transform: rotate(225deg);
}

.panel-menu {
    position: absolute;
    right: 6px;
    top: 9px;
    width: 11px;
    height: 10px;
    color: #aaa;
}

.color-panel {
    height: 330px;
}

.color-body {
    position: relative;
    padding: 0 6px;
}

.color-top {
    height: 115px;
    display: flex;
}

.color-left {
    width: 47px;
    position: relative;
    flex: none;
}

.fs-default.small {
    left: 2px;
    top: 6px;
}

.fs-swap.small {
    left: 24px;
    top: 6px;
    width: 12px;
    height: 12px;
}

.cp-fill {
    position: absolute;
    z-index: 1;
    left: 0;
    top: 25px;
    width: 18px;
    height: 18px;
    background: #000;
    border: 1px solid #fff;
}

.cp-stroke {
    position: absolute;
    left: 10px;
    top: 35px;
    width: 18px;
    height: 18px;
    background: linear-gradient(to top left, #fff calc(50% - 1px), #f01218 calc(50% - 1px) calc(50% + 1px), #fff calc(50% + 1px));
}

.cube {
    position: absolute;
    left: 3px;
    top: 67px;
    width: 14px;
    height: 14px;
}

.outline-sq {
    position: absolute;
    left: 23px;
    top: 68px;
    width: 14px;
    height: 14px;
    border: 1px solid #fff;
}

.sliders {
    display: flex;
    flex-direction: column;
    gap: 5px;
    padding-top: 8px;
}

.slider-row {
    height: 20px;
    display: flex;
    align-items: center;
    font-size: 10.5px;
    font-weight: 700;
    color: #8e8e8e;
}

.slider-row label {
    width: 18px;
    flex: none;
}

.track {
    position: relative;
    width: 101px;
    height: 4px;
    margin-top: -2px;
    margin-right: 8px;
    flex: none;
}

.t-c {
    background: linear-gradient(90deg, #202020, #0c2440);
}

.t-m {
    background: linear-gradient(90deg, #202020, #4a0808);
}

.t-y {
    background: linear-gradient(90deg, #202020, #3c3c08);
}

.t-k {
    background: linear-gradient(90deg, #fff, #1e1e1e);
}

.pin {
    position: absolute;
    left: -4px;
    top: 5px;
    width: 8px;
    height: 8px;
    background: #b4b4b4;
    clip-path: polygon(50% 0, 100% 45%, 100% 100%, 0 100%, 0 45%);
}

.pin.end {
    left: 97px;
}

.num {
    width: 36px;
    height: 20px;
    padding-left: 5px;
    line-height: 17px;
    flex: none;
    background: #2a2a2a;
    border: 1px solid #3a3a3a;
    border-radius: 3px;
    font-weight: 400;
    color: #d0d0d0;
}

.slider-row em {
    margin-left: 5px;
    font-weight: 400;
    color: #a0a0a0;
}

.mini-swatches {
    display: flex;
    height: 13px;
    margin-bottom: 11px;
}

.mini-swatches svg, .mini-swatches i {
    width: 13px;
    height: 13px;
    display: block;
}

.mk {
    background: #000;
}

.mw {
    background: #fff;
}

.spectrum {
    width: 273px;
    height: 155px;
    margin-left: 1px;
    outline: 1px solid #1c1c1c;
    background:
        linear-gradient(#fff 0, rgba(255, 255, 255, .72) 14%, rgba(255, 255, 255, .38) 32%, rgba(255, 255, 255, .1) 45%, rgba(255, 255, 255, 0) 52%, rgba(0, 0, 0, 0) 60%, rgba(0, 0, 0, .5) 80%, #000 100%),
        radial-gradient(ellipse 6% 30% at 15% 50%, #fbe80e, rgba(251, 232, 14, 0)),
        radial-gradient(ellipse 5% 26% at 54% 54%, #16b6e8, rgba(22, 182, 232, 0)),
        linear-gradient(90deg, #e80c18 0, #ef6a12 8%, #e6c814 15%, #a8c00e 24%, #5cab1c 36%, #3fa848 45%, #1ea08c 51%, #1a88c4 56%, #1e4c9c 65%, #2c3f98 73%, #7e4498 83%, #d4007c 92%, #ea0c18 100%);
}

.transp-panel {
    height: 130px;
}

.transp-top {
    display: flex;
    align-items: center;
    gap: 6px;
    height: 32px;
    margin: 0 7px 0 6px;
    border-bottom: 2px solid #3a3a3a;
}

.blend-select {
    width: 129px;
    height: 20px;
    flex: none;
    padding: 0 3px 0 6px;
    display: flex;
    align-items: center;
    justify-content: space-between;
    background: #2a2a2a;
    border: 1px solid #404040;
    border-radius: 3px;
    color: #d0d0d0;
}

.panel-label {
    width: 76px;
    font-size: 10.5px;
}

.p-opacity {
    width: 68px;
    height: 20px;
}

.p-opacity .chev {
    margin: 0 4px;
}

.transp-mask {
    display: flex;
    padding: 8px 6px;
    gap: 4px;
}

.mask-preview {
    width: 135px;
    height: 55px;
    border: 1px solid #3a3a3a;
    border-radius: 3px;
    background: #323232;
}

.mask-opts {
    display: flex;
    flex-direction: column;
}

.mask-btn {
    width: 99px;
    height: 20px;
    line-height: 19px;
    text-align: center;
    background: #3a3a3a;
    color: #585858;
}

.mask-check {
    height: 20px;
    padding-left: 1px;
    display: flex;
    align-items: center;
    gap: 6px;
    color: #555;
}

.mask-check i {
    width: 12px;
    height: 12px;
    border: 1px solid #4a4a4a;
    border-radius: 2px;
}

.layers-panel {
    flex: 1;
    margin-top: 4px;
    display: flex;
    flex-direction: column;
}

.layers {
    flex: 1;
    margin: 6px 7px 0 5px;
    border: 1px solid #3c3c3c;
    border-radius: 3px;
}

.layer {
    position: relative;
    height: 21px;
    display: flex;
    align-items: center;
    border-bottom: 1px solid #282828;
    color: #d0d0d0;
    font-size: 10px;
    font-weight: 700;
}

.layer.selected {
    background: #34495e;
    color: #e4e4e4;
}

.l-eye, .l-lock {
    width: 21px;
    height: 100%;
    flex: none;
    display: flex;
    align-items: center;
    justify-content: center;
    border-right: 1px solid #282828;
}

.l-eye svg {
    width: 13px;
    height: 9px;
}

.l-lock svg {
    width: 9px;
    height: 11px;
}

.l-color {
    width: 3px;
    height: 17px;
    margin-left: 1px;
    flex: none;
}

.l-arrow {
    width: 10px;
    height: 10px;
    margin: 0 11px 0 5px;
    flex: none;
    color: #b8b8b8;
}

.thumb-box {
    width: 18px;
    height: 18px;
    flex: none;
    background: #fff;
    border: 1px solid #000;
}

.thumb-box svg {
    display: block;
    width: 16px;
    height: 16px;
}

.l-name {
    margin-left: 5px;
    flex: 1;
}

.l-target {
    width: 36px;
    height: 100%;
    flex: none;
    display: flex;
    align-items: center;
    padding-left: 6px;
    border-left: 1px solid #282828;
}

.l-target i {
    width: 9px;
    height: 9px;
    border: 1px solid #aaa;
    border-radius: 50%;
}

.l-target.filled i {
    background: #888;
}

.l-corner {
    position: absolute;
    right: 0;
    top: 0;
    width: 6px;
    height: 6px;
    background: #c0c0c0;
    clip-path: polygon(0 0, 100% 0, 100% 100%);
}

.layers-foot {
    height: 20px;
    flex: none;
    display: flex;
    align-items: center;
    justify-content: space-between;
    padding: 0 5px;
}

.foot-count {
    color: #a0a0a0;
}

.foot-icons {
    display: flex;
    gap: 12px;
    margin-right: 21px;
}

.foot-icons svg {
    width: 14px;
    height: 14px;
}

/* windows taskbar */
.taskbar {
    height: 50px;
    flex: none;
    display: flex;
    align-items: center;
    background: linear-gradient(90deg, #d6d6d6 0, #d6d6d6 65%, #e6dcd3 74%, #d6d6d6 84%);
    color: #111;
}

.win-logo {
    width: 20px;
    height: 20px;
    margin: 0 21px 0 20px;
}

.search-box {
    width: 358px;
    height: 48px;
    padding-left: 14px;
    display: flex;
    align-items: center;
    gap: 15px;
    background: #fff;
    font-family: "Open Sans", sans-serif;
    font-size: 18px;
    color: #222;
}

.search-box svg {
    width: 21px;
    height: 23px;
}

.task-icons {
    display: flex;
    margin-left: 5px;
}

.task {
    position: relative;
    width: 62px;
    height: 50px;
    display: flex;
    align-items: center;
    justify-content: center;
}

.task:first-child {
    width: 59px;
}

.task svg {
    width: 30px;
    height: 30px;
}

.task:first-child svg {
    width: 21px;
    height: 24px;
    margin-right: 8px;
}

.task.bar::after {
    content: "";
    position: absolute;
    left: 4px;
    right: 4px;
    bottom: 0;
    height: 3px;
    background: #7f734f;
}

.task.current {
    width: 60px;
    background: #efefef;
}

.task.current::after {
    left: 0;
    right: 0;
}

.ai-task {
    width: 29px;
    height: 29px;
    line-height: 25px;
    text-align: center;
    background: #2a1200;
    border: 2px solid #e8770c;
    color: #f08010;
    font-size: 17px;
}

.badge {
    position: absolute;
    left: 26px;
    top: 24px;
    width: 36px;
    height: 21px;
    line-height: 19px;
    text-align: center;
    border: 1px solid #666;
    border-radius: 10px;
    background: rgba(200, 210, 215, .8);
    color: #111;
    font-size: 14px;
    font-weight: 400;
}

.ya-y {
    font-size: 24px;
    fill: #d01020;
}

.tray {
    margin-left: auto;
    display: flex;
    align-items: center;
    font-family: "Open Sans", sans-serif;
}

.help {
    position: relative;
    width: 27px;
    height: 27px;
    margin-right: 11px;
    border-radius: 50%;
    border: 2px solid #fff;
    background: #1494d8;
    color: #fff;
    text-align: center;
    font-family: "Liberation Sans", sans-serif;
    font-size: 19px;
    line-height: 23px;
}

.help i {
    position: absolute;
    right: -5px;
    bottom: -4px;
    width: 13px;
    height: 13px;
    border-radius: 50%;
    background: #f5a81c;
    font-size: 10px;
    line-height: 13px;
    font-weight: 700;
}

.tray-ico {
    width: 18px;
    height: 18px;
    margin-right: 12px;
}

.lang {
    margin: 0 16px 0 2px;
    font-size: 14px;
}

.clock {
    width: 76px;
    display: flex;
    flex-direction: column;
    align-items: center;
    gap: 6px;
    font-size: 14px;
    line-height: 17px;
}

.notify {
    position: relative;
    width: 21px;
    height: 21px;
    margin: 0 30px 6px 20px;
}

.notify svg {
    width: 21px;
    height: 21px;
    display: block;
}

.notify b {
    position: absolute;
    left: 9px;
    top: 12px;
    width: 20px;
    height: 20px;
    line-height: 18px;
    text-align: center;
    border: 1px solid #666;
    border-radius: 50%;
    background: rgba(214, 214, 214, .85);
    font-size: 14px;
    font-weight: 400;
}
```
